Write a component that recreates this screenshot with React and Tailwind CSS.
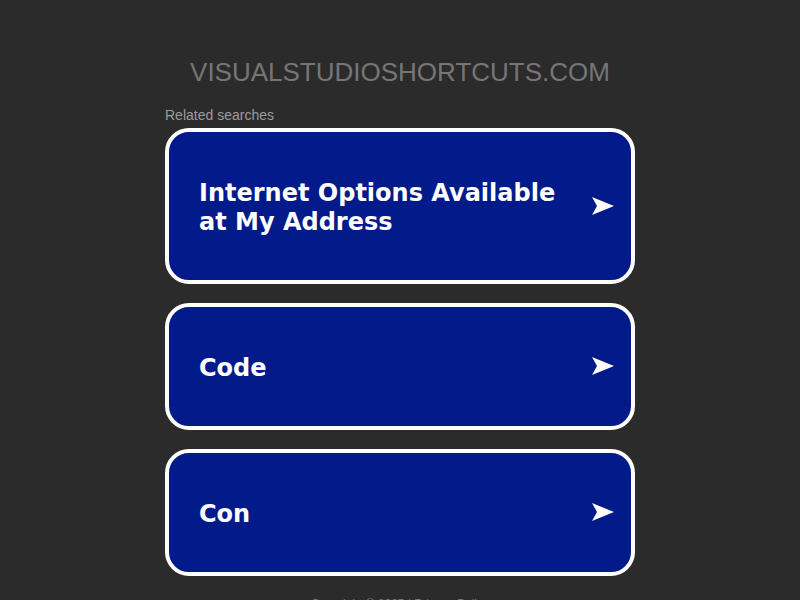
import React from "react";

const items = ["Internet Options Available at My Address", "Code", "Con"];

function Arrow() {
  return (
    <svg width="22" height="18" viewBox="0 0 22 18" className="shrink-0 mb-[5px]">
      <path d="M0 0 L22 9 L0 18 L5 9 Z" fill="#ffffff" />
    </svg>
  );
}

export default function App() {
  return (
    <div className="h-[600px] w-full bg-[#2b2b2b] overflow-hidden" style={{ fontFamily: '"Liberation Sans", Arial, sans-serif' }}>
      <div className="mx-auto w-[470px] pt-[57px]">
        <div className="text-center text-[26px] leading-[30px] text-[#767676] -mx-10">VISUALSTUDIOSHORTCUTS.COM</div>
        <div className="mt-[20px] text-[14px] leading-[16px] text-[#9b9b9b]">Related searches</div>
        <div className="mt-[5px] flex flex-col gap-[19px]">
          {items.map((t) => (
            <div
              key={t}
              className="flex items-center justify-between rounded-[24px] border-4 border-white bg-[#021a8a] pl-[30px] pr-[17px] pt-[47px] pb-[43px]"
            >
              <div
                className="text-[24px] leading-[29px] font-bold text-white w-[380px]"
                style={{ fontFamily: '"DejaVu Sans", Verdana, sans-serif' }}
              >
                {t}
              </div>
              <Arrow />
            </div>
          ))}
        </div>
        <div className="mt-[20px] text-center text-[12px] leading-[16px] text-[#777]">Copyright © 2025 | Privacy Policy</div>
      </div>
    </div>
  );
}
